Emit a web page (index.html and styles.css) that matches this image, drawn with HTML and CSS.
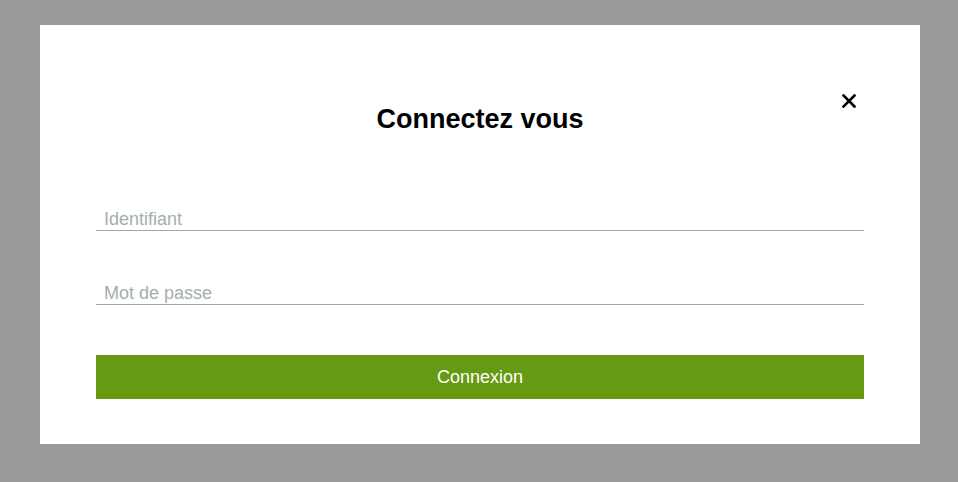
FILE: index.html
```html
<!DOCTYPE html>
<html lang="fr">
<head>
<meta charset="utf-8">
<title>Connectez vous</title>
<link rel="stylesheet" href="styles.css">
</head>
<body>
<div class="overlay">
  <div class="modal">
    <button class="close" type="button" aria-label="Fermer">
      <svg width="14" height="14" viewBox="0 0 14 14"><path d="M1.5 1.5 L12.5 12.5 M12.5 1.5 L1.5 12.5" stroke="#000" stroke-width="2.6" stroke-linecap="square" fill="none"/></svg>
    </button>
    <h2 class="title">Connectez vous</h2>
    <form class="form">
      <input class="field" type="text" placeholder="Identifiant">
      <input class="field" type="password" placeholder="Mot de passe">
      <button class="submit" type="button">Connexion</button>
    </form>
  </div>
</div>
</body>
</html>
```
FILE: styles.css
```css
html, body {
  margin: 0;
  padding: 0;
  height: 100%;
}
body {
  background: #999999;
  font-family: "Liberation Sans", Arial, sans-serif;
}
.overlay {
  padding: 25px 38px 38px 40px;
}
.modal {
  position: relative;
  background: #ffffff;
  height: 419px;
  box-sizing: border-box;
  padding: 79px 56px 0 56px;
}
.close {
  position: absolute;
  top: 69px;
  right: 64px;
  width: 14px;
  height: 14px;
  padding: 0;
  border: 0;
  background: none;
  display: flex;
  cursor: pointer;
}
.title {
  margin: 0;
  text-align: center;
  font-size: 27px;
  line-height: 30px;
  font-weight: bold;
  color: #000;
}
.form {
  display: flex;
  flex-direction: column;
  margin-top: 74px;
}
.field {
  display: block;
  height: 23px;
  box-sizing: border-box;
  border: 0;
  border-bottom: 1px solid #9aaca7;
  padding: 0 8px;
  font-family: "Liberation Sans", Arial, sans-serif;
  font-size: 18px;
  line-height: 22px;
  color: #333;
  outline: none;
  background: transparent;
}
.field + .field {
  margin-top: 51px;
}
.field::placeholder {
  color: #a2b1ab;
}
.submit {
  margin-top: 50px;
  height: 44px;
  border: 0;
  background: #679a13;
  color: #ffffff;
  font-family: "Liberation Sans", Arial, sans-serif;
  font-size: 18px;
  cursor: pointer;
}
```
